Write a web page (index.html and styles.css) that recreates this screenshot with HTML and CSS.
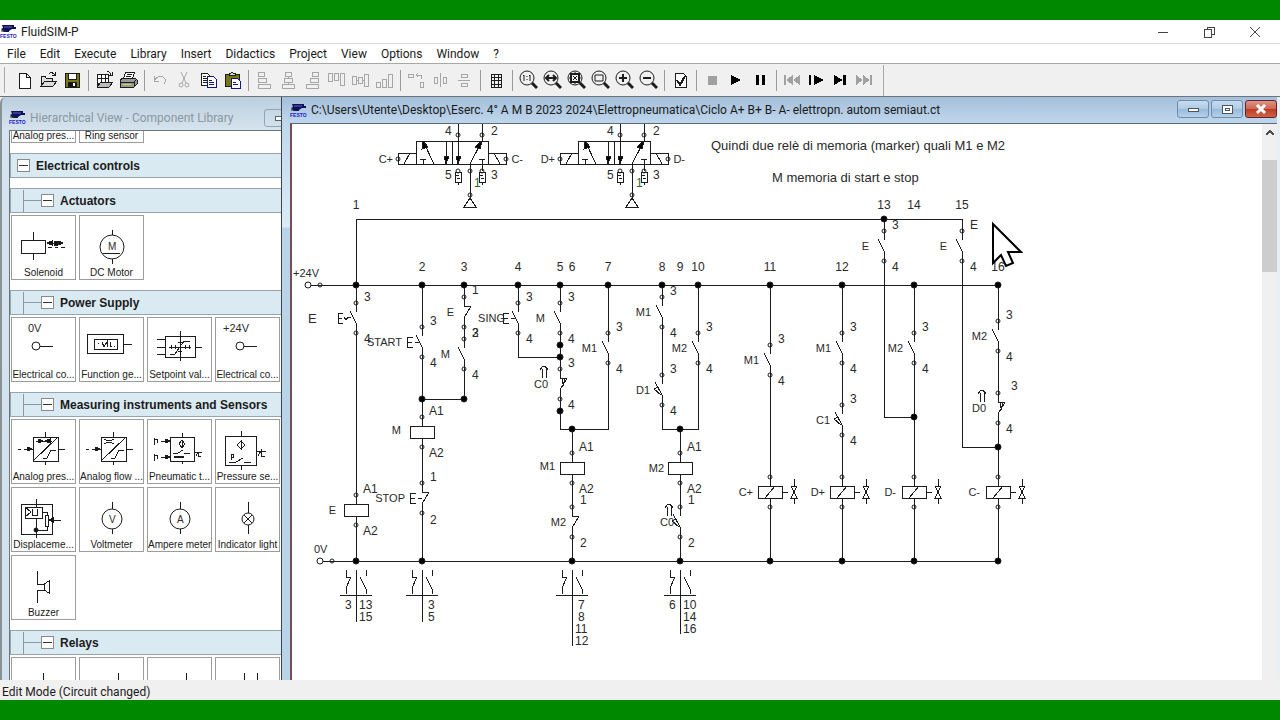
FILE: index.html
```html
<!DOCTYPE html>
<html lang="en">
<head>
  <meta charset="UTF-8">
  <title>FluidSIM-P</title>
  <link rel="stylesheet" href="styles.css">
</head>
<body>
  <!-- shared shapes -->
  <svg class="defs" width="0" height="0" aria-hidden="true">
    <defs>
      <symbol id="festo" viewBox="0 0 17 15">
        <path d="M2 1h12v2h2v2h-4l-3 2v1H4L1 5l2-1z" fill="#10105a"/>
        <path d="M4 3h8" stroke="#5a6ac8"/>
        <path d="M1 7h5" stroke="#222"/>
        <text x="0" y="14" font-size="5" font-weight="bold" class="festo-text">FESTO</text>
      </symbol>

      <g id="lens"><circle cx="9" cy="8" r="7"/><path d="M14 13l5 5" stroke-width="3"/></g>

      <!-- circuit symbols, origin = upper terminal -->
      <circle id="t" r="2"/>
      <circle id="dot" r="3" class="fill"/>
      <g id="no">
        <path d="M0 0V9M-6 8L0 20V30"/>
        <use href="#t"/><use href="#t" y="30"/>
      </g>
      <g id="nc">
        <path d="M0 0V9H7L0 21V30"/>
        <use href="#t"/><use href="#t" y="30"/>
      </g>
      <g id="no-limit">
        <path d="M0 0V9M-7 7L0 20V30M-4 12L-8 14L-1 20"/>
        <use href="#t"/><use href="#t" y="30"/>
      </g>
      <g id="nc-limit">
        <path d="M0 0V9H7L0 21V30M2 9L3 15M5 9L3 17"/>
        <use href="#t"/><use href="#t" y="30"/>
      </g>
      <g id="coil">
        <path d="M0 0V9M0 21V30M-12 9H12V21H-12Z"/>
        <use href="#t"/><use href="#t" y="30"/>
      </g>
      <g id="valve-coil">
        <use href="#coil"/>
        <path d="M-5 21L5 9M12 15H18M24 2V9M24 21V27M21 9H27L21 21H27Z"/>
      </g>
      <path id="push" d="M-9 10H-15V20H-9M-15 15H-10M-7 15H-3"/>
      <path id="hollow-up" d="M-2 12V3M2 12V3M-4 4L-1 0H1L4 4"/>
      <path id="xref" d="M0 9V34M-16 34H16M-10 9V16H-5L-10 27V33M10 9V15M4 16L10 28V33"/>

      <g id="valve">
        <path d="M416 141H488V164H416ZM452 141V164"/>
        <path d="M434 164L423 141M446 141V164M458 124V164M482 124V141M470 164L482 141"/>
        <path d="M420 159H426M423 159V164M479 159H485M482 159V171M470 164V198"/>
        <path d="M416 153H398V164H416M404 164L410 153M488 153H506V164H488M494 153L500 164"/>
        <path d="M470 198L464 207H476Z"/>
        <path class="fill" d="M423 141L422 149L428 147ZM482 141L475 147L480 149ZM444 156H449L446 164ZM456 156H461L458 164Z"/>
        <path d="M455 172H461V182H455ZM479 172H485V182H479ZM456 175H459M457 178H460M480 175H483M481 178H484M458 182V185M482 182V185"/>
        <use href="#t" x="458" y="135"/><use href="#t" x="482" y="135"/>
        <use href="#t" x="458" y="171"/><use href="#t" x="482" y="171"/>
        <use href="#t" x="470" y="171"/><use href="#t" x="470" y="195"/>
        <use href="#t" x="398" y="159"/><use href="#t" x="506" y="159"/>
        <g class="label">
          <text x="445" y="135">4</text><text x="491" y="135">2</text>
          <text x="445" y="179">5</text><text x="491" y="179">3</text>
          <text x="474" y="187" class="port">1</text>
        </g>
      </g>
    </defs>
  </svg>

  <div class="app">
    <header class="titlebar">
      <svg class="logo"><use href="#festo"/></svg>
      <span class="app-name">FluidSIM-P</span>
      <div class="window-controls">
        <button aria-label="Minimize"><svg width="12" height="12"><path d="M1 6h10"/></svg></button>
        <button aria-label="Restore"><svg width="12" height="12"><path d="M1 3h7v8H1zM4 3V1h7v7H8"/></svg></button>
        <button aria-label="Close"><svg width="12" height="12"><path d="M1 1l10 10M11 1L1 11"/></svg></button>
      </div>
    </header>

    <nav class="menubar">
      <button>File</button><button>Edit</button><button>Execute</button><button>Library</button><button>Insert</button><button>Didactics</button><button>Project</button><button>View</button><button>Options</button><button>Window</button><button>?</button>
    </nav>

    <div class="toolbar" role="toolbar">
      <span class="grip"></span>
      <button aria-label="New"><svg><path d="M5 3h7l4 4v11H5zM12 3v4h4" fill="#fff"/></svg></button>
      <button aria-label="Open"><svg><path d="M3 16V6h4l1 2h6v3M3 16l4-5h12l-4 5z" fill="#ddd"/><path d="M11 4q3-3 6 1M17 2v3h-3"/></svg></button>
      <button aria-label="Save"><svg><path d="M3 3h14v14H3z" fill="#77771a"/><path d="M6 3h8v6H6z" fill="#fff"/><path d="M6 12h8v5H6z" fill="#111"/><path d="M12 13v3" stroke="#fff" stroke-width="2"/></svg></button>
      <i class="sep"></i>
      <button aria-label="Open preview"><svg><path d="M3 4h11v9H3zM7 4v9M11 4v9M3 8h11" fill="#fff"/><path d="M3 13v4h12l4-5H7l-4 5" fill="#bbb"/><path d="M13 2q3-1 4 3M18 2v3h-3"/></svg></button>
      <button aria-label="Print"><svg><path d="M5 9l3-7h9l-3 7z" fill="#fff"/><path d="M9 4h5M8 6h5"/><path d="M2 10l3-2h12l2 2v4l-3 3H2z" fill="#999"/><path d="M2 12h14v5M16 12l3-3"/><path d="M5 14h8" stroke="#d8d820"/></svg></button>
      <i class="sep"></i>
      <button aria-label="Undo" disabled><svg><path d="M4 6v5h5M4 11q4-6 9-4q4 2 1 7" /></svg></button>
      <button aria-label="Cut" disabled><svg class="smooth"><path d="M7 2l5 11M13 2L8 13"/><circle cx="7" cy="15" r="2"/><circle cx="13" cy="15" r="2"/></svg></button>
      <button aria-label="Copy"><svg><path d="M3 3h6l3 3v9H3z" fill="#fff"/><path d="M5 6h3M5 8h5M5 10h5M5 12h5"/><g stroke="#14148c"><path d="M9 6h6l3 3v8H9z" fill="#fff"/><path d="M11 10h3M11 12h5M11 14h5"/></g></svg></button>
      <button aria-label="Paste"><svg><path d="M3 4h14v12H3z" fill="#77771a"/><path d="M7 5V3h2l1-1l1 1h2v2z" fill="#ddc"/><g stroke="#14148c"><path d="M9 8h6l3 3v7H9z" fill="#fff"/><path d="M11 12h3M11 14h5"/></g></svg></button>
      <i class="sep"></i>
      <button aria-label="Align left" disabled><svg><path d="M4 2h6v4H4zM4 8h8v4H4zM4 14h12v4H4z"/></svg></button>
      <button aria-label="Center horizontally" disabled><svg><path d="M7 2h6v4H7zM6 8h8v4H6zM4 14h12v4H4zM10 6v2M10 12v2"/></svg></button>
      <button aria-label="Align right" disabled><svg><path d="M10 2h6v4h-6zM8 8h8v4H8zM4 14h12v4H4z"/></svg></button>
      <button aria-label="Align top" disabled><svg><path d="M2 3h4v8H2zM8 3h4v7H8zM14 3h4v12h-4z"/></svg></button>
      <button aria-label="Center vertically" disabled><svg><path d="M2 6h4v8H2zM8 7h4v6H8zM14 4h4v12h-4zM6 10h2M12 10h2"/></svg></button>
      <button aria-label="Align bottom" disabled><svg><path d="M2 12h4v5H2zM8 9h4v8H8zM14 4h4v13h-4z"/></svg></button>
      <i class="sep"></i>
      <button aria-label="Rotate" disabled><svg><path d="M2 4h5v3H2zM14 12h3v5h-3zM10 5h4q2 0 2 4M12 3l-2 2l2 2"/></svg></button>
      <button aria-label="Mirror horizontally" disabled><svg><path d="M10 3v14M4 7h3v6H4zM13 7h3v6h-3z"/></svg></button>
      <button aria-label="Mirror vertically" disabled><svg><path d="M4 10h12M7 4h6v3H7zM7 13h6v3H7z"/></svg></button>
      <i class="sep"></i>
      <button aria-label="Grid"><svg><path d="M5 4h10v13H5zM8 4v13M12 4v13M5 7h10M5 10h10M5 14h10"/></svg></button>
      <i class="sep"></i>
      <button aria-label="Zoom 1:1"><svg class="smooth"><use href="#lens"/><path d="M6 5v6M5 6l1-1M9 6v1M9 9v1M12 5v6M11 6l1-1"/></svg></button>
      <button aria-label="Zoom previous"><svg class="smooth"><use href="#lens"/><path d="M4 8h10M7 5L4 8l3 3M11 5l3 3l-3 3" stroke-width="2"/></svg></button>
      <button aria-label="Fit to window"><svg class="smooth"><use href="#lens"/><path d="M5 4h8v8H5z" stroke-width="2"/><path d="M3 8h3M12 8h3M9 2v3M9 11v3M7 6l4 4M11 6l-4 4"/></svg></button>
      <button aria-label="Zoom section"><svg class="smooth"><use href="#lens"/><path d="M5 5h8v6H5z"/></svg></button>
      <button aria-label="Zoom in"><svg class="smooth"><use href="#lens"/><path d="M5 8h8M9 4v8" stroke-width="2"/></svg></button>
      <button aria-label="Zoom out"><svg class="smooth"><use href="#lens"/><path d="M5 8h8" stroke-width="2"/></svg></button>
      <i class="sep"></i>
      <button aria-label="Check drawing"><svg><path d="M5 3h8l3 3v11H5z" fill="#fff"/><path d="M7 10l3 5l5-9" stroke-width="2"/></svg></button>
      <i class="sep"></i>
      <button aria-label="Stop" disabled><svg><path class="solid" d="M6 6h9v9H6z"/></svg></button>
      <button aria-label="Start"><svg><path class="solid" d="M5 5l10 5l-10 5z"/></svg></button>
      <button aria-label="Pause"><svg><path class="solid" d="M6 5h3v10H6zM12 5h3v10h-3z"/></svg></button>
      <i class="sep"></i>
      <button aria-label="Reset" disabled><svg><path class="solid" d="M2 5h2v10H2zM11 5v10l-7-5zM18 5v10l-7-5z"/></svg></button>
      <button aria-label="Single step"><svg><path class="solid" d="M3 5h2v10H3zM8 5l10 5l-10 5z"/></svg></button>
      <button aria-label="Simulate until state change"><svg><path class="solid" d="M4 5l9 5l-9 5zM13 5h3v10h-3z"/></svg></button>
      <button aria-label="Next topic" disabled><svg><path class="solid" d="M2 5v10l7-5zM9 5v10l7-5zM16 5h2v10h-2z"/></svg></button>
      <span class="toolbar-end"></span>
    </div>

    <main class="workspace">
      <section class="library">
        <header class="library-title">
          <svg class="logo"><use href="#festo"/></svg>
          <span>Hierarchical View - Component Library</span>
          <button class="library-min" aria-label="Minimize library"><svg width="12" height="8"><path d="M1 2h10v4H1z"/></svg></button>
        </header>
        <div class="tree">
          <div class="parts scrolled">
            <div class="part"><span>Analog pres...</span></div>
            <div class="part"><span>Ring sensor</span></div>
          </div>

          <h2 class="group top"><button aria-label="Collapse"></button>Electrical controls</h2>

          <h3 class="group"><button aria-label="Collapse"></button>Actuators</h3>
          <div class="parts">
            <div class="part">
              <svg><path d="M9 24H33V37H9ZM21 16V24M21 37V44M36 31H40M43 31H46M49 31H53M35 27H51"/><path class="fill" d="M35 27l5-2v4zM42 25h3v4h-3zM51 27l-5-2v4z"/></svg>
              <span>Solenoid</span>
            </div>
            <div class="part">
              <svg><circle cx="32" cy="31" r="12"/><path d="M32 14V19M32 43V48M23 37H40"/><text x="28" y="34">M</text></svg>
              <span>DC Motor</span>
            </div>
          </div>

          <h3 class="group"><button aria-label="Collapse"></button>Power Supply</h3>
          <div class="parts">
            <div class="part">
              <svg><text x="16" y="14" class="big">0V</text><circle cx="24" cy="28" r="4"/><path d="M28 28H41"/></svg>
              <span>Electrical co...</span>
            </div>
            <div class="part">
              <svg><path d="M7 16H43V35H7ZM14 21H37V31H14ZM43 26H52M18 25h1M22 24l2 5l3-5v5M30 24v4h2M34 28h1"/></svg>
              <span>Function ge...</span>
            </div>
            <div class="part">
              <svg><path d="M17 18H47V39H17ZM9 21H17M9 29H17M9 36H17M47 29H54M32 13V43M21 29H43M23 27v4M27 27v4M37 27v4M41 27v4M30 24h4M30 33h4M22 36h5l9-13h6"/></svg>
              <span>Setpoint val...</span>
            </div>
            <div class="part">
              <svg><text x="7" y="14" class="big">+24V</text><circle cx="24" cy="28" r="4"/><path d="M28 28H41"/></svg>
              <span>Electrical co...</span>
            </div>
          </div>

          <h3 class="group"><button aria-label="Collapse"></button>Measuring instruments and Sensors</h3>
          <div class="parts">
            <div class="part">
              <svg><path d="M21 17H46V41H21ZM21 41L46 17M6 29H9M12 29H21M46 29H53M33 12V17M33 41V45M24 21H40M31 38h4l4-8h5"/><path class="fill" d="M15 27v4l5-2zM26 19v4l5-2zM38 19v4l-5-2z"/></svg>
              <span>Analog pres...</span>
            </div>
            <div class="part">
              <svg><path d="M21 17H46V41H21ZM21 41L46 17M6 29H9M12 29H21M46 29H53M33 12V17M33 41V45M31 38h4l4-8h5M24 19q5 4 10 0M24 24q5-4 10 0"/><path class="fill" d="M15 27v4l5-2z"/></svg>
              <span>Analog flow ...</span>
            </div>
            <div class="part">
              <svg><path d="M22 17H46V41H22ZM34 13V17M34 41V44M13 21H22M13 37H22M6 18v7M6 19h3v4M6 34v7M6 35h3v4M25 33h5l5-3M36 33h6M46 32H54M48 36l2-4v4h3M34 20l-3 4l3 4l3-4zM34 20v8"/><path d="M26 37H36" stroke-width="2"/><path class="fill" d="M17 19v4l5-2zM17 35v4l5-2z"/></svg>
              <span>Pneumatic t...</span>
            </div>
            <div class="part">
              <svg><path d="M9 16H40V45H9ZM25 11V16M25 45V50M40 31H50M42 36l3-5v5h4M25 21l-4 4l4 4l4-4zM25 20v10M15 34v6M15 34h2v3h-2M13 42h7l7-4M28 42h7"/></svg>
              <span>Pressure se...</span>
            </div>
            <div class="part">
              <svg><path d="M9 16H40V46H9ZM24 11V19M13 19H30V30H13ZM13 19l6 5l-6 5M20 21v6h5v-6M30 24H35V27M33 27H36V38H33ZM35 38V42H24M24 30V50M38 32H49"/><circle cx="24" cy="42" r="2" class="fill"/><path class="fill" d="M37 32l4-2v4z"/></svg>
              <span>Displaceme...</span>
            </div>
            <div class="part">
              <svg><circle cx="32" cy="31" r="10"/><path d="M32 14V21M32 41V46"/><text x="29" y="35">V</text></svg>
              <span>Voltmeter</span>
            </div>
            <div class="part">
              <svg><circle cx="32" cy="31" r="10"/><path d="M32 14V21M32 41V46"/><text x="29" y="35">A</text></svg>
              <span>Ampere meter</span>
            </div>
            <div class="part">
              <svg><circle cx="32" cy="31" r="6"/><path d="M32 14V25M32 37V46M28 27L36 35M36 27L28 35"/></svg>
              <span>Indicator light</span>
            </div>
            <div class="part">
              <svg><path d="M25 15V28H32V34H25V47M32 28L37 25V37L32 34"/></svg>
              <span>Buzzer</span>
            </div>
          </div>

          <h3 class="group"><button aria-label="Collapse"></button>Relays</h3>
          <div class="parts">
            <div class="part"><svg><path d="M31 15V40"/></svg></div>
            <div class="part"><svg><path d="M38 15V40"/></svg></div>
            <div class="part"><svg><path d="M38 15V40"/></svg></div>
            <div class="part"><svg><path d="M28 15V40M41 15V40"/></svg></div>
          </div>
        </div>
      </section>

      <section class="circuit">
        <header class="circuit-title">
          <svg class="logo"><use href="#festo"/></svg>
          <span class="path">C:\Users\Utente\Desktop\Eserc. 4° A M B 2023 2024\Elettropneumatica\Ciclo A+ B+ B- A- elettropn. autom semiaut.ct</span>
          <button aria-label="Minimize circuit"><svg width="12" height="10"><path d="M1 4h10v3H1z"/></svg></button>
          <button aria-label="Maximize circuit"><svg width="12" height="10"><path d="M1 1h10v8H1z"/><path d="M4 4h4v2H4z"/></svg></button>
          <button class="close" aria-label="Close circuit"><svg width="12" height="10"><path d="M2 1l8 8M10 1L2 9" stroke="#fff" stroke-width="3"/></svg></button>
        </header>

        <div class="sheet">
          <svg class="drawing" viewBox="292 124 969 556">
            <use href="#valve"/>
            <use href="#valve" x="162"/>

            <!-- wires -->
            <path d="M356 303V219H962V231M884 219V231M311 285H998M323 561H998"/>
            <path d="M356 333V495M356 525V561"/>
            <path d="M422 285V327M422 357V417M422 447V483M422 513V561M464 285V297M464 327V339M464 369V399H422"/>
            <path d="M518 285V303M518 333V357H560M560 285V303M560 333V369M560 399V429H608V363M608 285V333"/>
            <path d="M572 429V453M572 483V507M572 537V561"/>
            <path d="M662 285V297M662 327V375M662 405V429H698V363M698 285V333M680 429V453M680 483V507M680 537V561"/>
            <path d="M770 285V345M770 375V477M770 507V561"/>
            <path d="M842 285V333M842 363V405M842 435V477M842 507V561"/>
            <path d="M884 261V417H914M914 285V333M914 363V477M914 507V561"/>
            <path d="M962 261V447H998M998 285V321M998 351V393M998 423V477M998 507V561"/>

            <!-- supply terminals -->
            <circle cx="308" cy="285" r="3" class="open"/><use href="#t" x="320" y="285"/>
            <circle cx="320" cy="561" r="3" class="open"/><use href="#t" x="332" y="561"/>

            <!-- junctions -->
            <use href="#dot" x="884" y="219"/>
            <use href="#dot" x="356" y="285"/><use href="#dot" x="422" y="285"/><use href="#dot" x="464" y="285"/><use href="#dot" x="518" y="285"/>
            <use href="#dot" x="560" y="285"/><use href="#dot" x="608" y="285"/><use href="#dot" x="662" y="285"/><use href="#dot" x="698" y="285"/>
            <use href="#dot" x="770" y="285"/><use href="#dot" x="842" y="285"/><use href="#dot" x="914" y="285"/><use href="#dot" x="998" y="285"/>
            <use href="#dot" x="422" y="399"/><use href="#dot" x="464" y="399"/>
            <use href="#dot" x="560" y="345"/><use href="#dot" x="560" y="357"/><use href="#dot" x="560" y="411"/>
            <use href="#dot" x="572" y="429"/><use href="#dot" x="680" y="429"/><use href="#dot" x="914" y="417"/><use href="#dot" x="998" y="447"/>
            <use href="#dot" x="356" y="561"/><use href="#dot" x="422" y="561"/><use href="#dot" x="572" y="561"/><use href="#dot" x="680" y="561"/>
            <use href="#dot" x="770" y="561"/><use href="#dot" x="842" y="561"/><use href="#dot" x="914" y="561"/><use href="#dot" x="998" y="561"/>

            <!-- contacts -->
            <use href="#no" x="356" y="303"/><use href="#no" x="422" y="327"/><use href="#no" x="464" y="339"/>
            <use href="#no" x="518" y="303"/><use href="#no" x="560" y="303"/><use href="#no" x="608" y="333"/>
            <use href="#no" x="662" y="297"/><use href="#no" x="698" y="333"/><use href="#no" x="770" y="345"/>
            <use href="#no" x="842" y="333"/><use href="#no" x="884" y="231"/><use href="#no" x="914" y="333"/>
            <use href="#no" x="962" y="231"/><use href="#no" x="998" y="321"/>
            <use href="#nc" x="464" y="297"/><use href="#nc" x="422" y="483"/><use href="#nc" x="572" y="507"/>
            <use href="#no-limit" x="662" y="375"/><use href="#no-limit" x="842" y="405"/><use href="#no-limit" x="680" y="507"/>
            <use href="#nc-limit" x="560" y="369"/><use href="#nc-limit" x="998" y="393"/>
            <use href="#push" x="422" y="327"/><use href="#push" x="518" y="303"/><use href="#push" x="425" y="483"/>
            <path d="M343 313H338V323H343M338 318H342M344 317L346 320L348 317H351"/>
            <use href="#hollow-up" x="544" y="366"/><use href="#hollow-up" x="669" y="504"/><use href="#hollow-up" x="982" y="390"/>

            <!-- coils -->
            <use href="#coil" x="356" y="495"/><use href="#coil" x="422" y="417"/><use href="#coil" x="572" y="453"/><use href="#coil" x="680" y="453"/>
            <use href="#valve-coil" x="770" y="477"/><use href="#valve-coil" x="842" y="477"/><use href="#valve-coil" x="914" y="477"/><use href="#valve-coil" x="998" y="477"/>

            <!-- contact tables -->
            <use href="#xref" x="356" y="561"/><path d="M356 595V622"/>
            <use href="#xref" x="422" y="561"/><path d="M422 595V622"/>
            <use href="#xref" x="572" y="561"/><path d="M572 595V646"/>
            <use href="#xref" x="680" y="561"/><path d="M680 595V634"/>

            <g class="label mid">
              <text x="356" y="209">1</text><text x="422" y="271">2</text><text x="464" y="271">3</text><text x="518" y="271">4</text>
              <text x="560" y="271">5</text><text x="572" y="271">6</text><text x="608" y="271">7</text><text x="662" y="271">8</text>
              <text x="680" y="271">9</text><text x="698" y="271">10</text><text x="770" y="271">11</text><text x="842" y="271">12</text>
              <text x="884" y="209">13</text><text x="914" y="209">14</text><text x="962" y="209">15</text><text x="998" y="271">16</text>
            </g>

            <g class="label">
              <text x="364" y="301">3</text><text x="364" y="343">4</text>
              <text x="430" y="325">3</text><text x="430" y="367">4</text>
              <text x="472" y="294">1</text><text x="472" y="337">2</text><text x="472" y="337">3</text><text x="472" y="379">4</text>
              <text x="526" y="301">3</text><text x="526" y="343">4</text>
              <text x="568" y="301">3</text><text x="568" y="343">4</text><text x="568" y="367">3</text><text x="568" y="409">4</text>
              <text x="616" y="331">3</text><text x="616" y="373">4</text>
              <text x="670" y="295">3</text><text x="670" y="337">4</text><text x="670" y="373">3</text><text x="670" y="415">4</text>
              <text x="706" y="331">3</text><text x="706" y="373">4</text>
              <text x="778" y="343">3</text><text x="778" y="385">4</text>
              <text x="850" y="331">3</text><text x="850" y="373">4</text><text x="850" y="403">3</text><text x="850" y="445">4</text>
              <text x="892" y="229">3</text><text x="892" y="271">4</text>
              <text x="922" y="331">3</text><text x="922" y="373">4</text>
              <text x="970" y="229">E</text><text x="970" y="271">4</text>
              <text x="1006" y="319">3</text><text x="1006" y="361">4</text><text x="1011" y="390">3</text><text x="1006" y="433">4</text>
              <text x="363" y="493">A1</text><text x="363" y="535">A2</text>
              <text x="429" y="415">A1</text><text x="429" y="457">A2</text><text x="430" y="481">1</text><text x="430" y="524">2</text>
              <text x="579" y="451">A1</text><text x="579" y="493">A2</text><text x="580" y="504">1</text><text x="580" y="547">2</text>
              <text x="687" y="451">A1</text><text x="687" y="493">A2</text><text x="688" y="504">1</text><text x="688" y="547">2</text>
              <text x="293" y="277" class="device">+24V</text><text x="314" y="553" class="device">0V</text>
              <text x="308" y="323" class="note">E</text>
            </g>

            <g class="device end">
              <text x="336" y="514">E</text><text x="402" y="346">START</text><text x="401" y="434">M</text><text x="405" y="502">STOP</text>
              <text x="454" y="316">E</text><text x="450" y="358">M</text><text x="505" y="322">SING</text><text x="545" y="322">M</text>
              <text x="548" y="388">C0</text><text x="597" y="352">M1</text><text x="555" y="470">M1</text><text x="566" y="526">M2</text>
              <text x="651" y="316">M1</text><text x="687" y="352">M2</text><text x="650" y="394">D1</text><text x="664" y="472">M2</text><text x="674" y="526">C0</text>
              <text x="759" y="364">M1</text><text x="831" y="352">M1</text><text x="830" y="424">C1</text><text x="903" y="352">M2</text>
              <text x="869" y="250">E</text><text x="947" y="250">E</text><text x="987" y="340">M2</text><text x="986" y="412">D0</text>
              <text x="753" y="496">C+</text><text x="825" y="496">D+</text><text x="896" y="496">D-</text><text x="980" y="496">C-</text>
              <text x="393" y="163">C+</text><text x="523" y="163">C-</text><text x="555" y="163">D+</text><text x="685" y="163">D-</text>
            </g>

            <g class="label">
              <text x="345" y="609">3</text><text x="359" y="609">13</text><text x="359" y="621">15</text>
              <text x="428" y="609">3</text><text x="428" y="621">5</text>
              <text x="578" y="609">7</text><text x="578" y="621">8</text><text x="575" y="633">11</text><text x="575" y="645">12</text>
              <text x="669" y="609">6</text><text x="683" y="609">10</text><text x="683" y="621">14</text><text x="683" y="633">16</text>
            </g>

            <g class="note">
              <text x="711" y="150">Quindi due relè di memoria (marker) quali M1 e M2</text>
              <text x="772" y="182">M memoria di start e stop</text>
            </g>

            <path class="cursor" d="M993 224L1021 252H1008L1013 263L1006 266L1001 255L993 263Z"/>
          </svg>
          <div class="scrollbar">
            <button aria-label="Scroll up"><svg width="10" height="8"><path d="M1 6l4-4l4 4"/></svg></button>
            <div class="track-above"></div>
            <div class="thumb"></div>
            <div class="track-below"></div>
          </div>
        </div>
      </section>
    </main>

    <footer class="statusbar">Edit Mode (Circuit changed)</footer>
  </div>
</body>
</html>
```
FILE: styles.css
```css
* {
  box-sizing: border-box;
}

body {
  margin: 0;
  height: 100vh;
  padding: 20px 0;
  background: #008800;
  font-family: Roboto, "Open Sans", sans-serif;
  font-size: 12px;
  color: #1a1a1a;
  overflow: hidden;
}

button {
  margin: 0;
  padding: 0;
  border: 0;
  background: none;
  font: inherit;
  color: inherit;
}

svg {
  display: block;
  fill: none;
  stroke: #1c1c1c;
  shape-rendering: crispEdges;
}

svg circle {
  shape-rendering: geometricPrecision;
}

svg text {
  stroke: none;
  fill: #2a2a2a;
  font-family: "Liberation Sans", Arial, sans-serif;
}

.defs {
  position: absolute;
}

.logo {
  width: 17px;
  height: 15px;
  flex: none;
  stroke: none;
  shape-rendering: auto;
}

.festo-text {
  fill: #1818c8;
}

.app {
  display: flex;
  flex-direction: column;
  height: 100%;
  background: #fff;
}

/* title bar */
.titlebar {
  display: flex;
  align-items: center;
  gap: 4px;
  height: 24px;
  flex: none;
  border-bottom: 1px solid #dcdcdc;
}

.window-controls {
  display: flex;
  margin-left: auto;
  padding-right: 2px;
}

.window-controls button {
  display: flex;
  justify-content: center;
  align-items: center;
  width: 46px;
  height: 22px;
}

.window-controls svg {
  stroke: #444;
}

/* menu */
.menubar {
  display: flex;
  height: 20px;
  flex: none;
  border-bottom: 1px solid #a8a8a8;
}

.menubar button {
  padding: 0 7px;
}

/* toolbar */
.toolbar {
  display: flex;
  align-items: center;
  height: 33px;
  flex: none;
  background: #f0f0f0;
  border-bottom: 1px solid #6e7378;
}

.toolbar button {
  width: 24px;
  height: 24px;
  padding: 2px;
}

.toolbar svg {
  width: 20px;
  height: 20px;
}

.toolbar .smooth {
  shape-rendering: auto;
}

.toolbar .solid {
  fill: #000;
  stroke: none;
}

.toolbar button:disabled svg {
  stroke: #a6a6a6;
}

.toolbar button:disabled .solid {
  fill: #a0a0a0;
}

.sep {
  width: 8px;
  height: 21px;
  background: linear-gradient(#9a9a9a, #9a9a9a) center / 1px 100% no-repeat;
}

.grip {
  width: 5px;
  height: 26px;
  margin-right: 7px;
  border-right: 1px solid #a8a8a8;
}

.toolbar-end {
  width: 8px;
  height: 31px;
  border-right: 1px solid #a8a8a8;
}

/* workspace */
.workspace {
  display: flex;
  flex: 1;
  min-height: 0;
  background: #e9eef2;
}

.library {
  display: flex;
  flex-direction: column;
  width: 282px;
  flex: none;
  padding-left: 7px;
  border-left: 2px solid #8a9299;
  border-right: 1px solid #3c4650;
  border-top-left-radius: 6px;
  background: linear-gradient(#bccfdf, #d6e3ee 33px, #d3e2ee);
  overflow: hidden;
}

.library-title {
  display: flex;
  align-items: center;
  gap: 4px;
  height: 33px;
  flex: none;
  padding-top: 8px;
  color: #8a979f;
  white-space: nowrap;
}

.library-min {
  width: 32px;
  height: 18px;
  flex: none;
  margin-left: auto;
  margin-right: -15px;
  padding-left: 9px;
  border: 1px solid #94a3b0;
  border-radius: 3px;
}

.library-min svg {
  stroke: #59636c;
  fill: #fff;
}

.tree {
  flex: 1;
  min-height: 0;
  border-top: 1px solid #69757f;
  border-left: 1px solid #69757f;
  background: #fff;
  overflow: hidden;
}

.group {
  display: flex;
  align-items: center;
  height: 25px;
  margin: 0;
  border: 1px solid #98a4ab;
  border-width: 1px 0 1px 1px;
  background: #daeaf3;
  font-family: "Liberation Sans", Arial, sans-serif;
  font-size: 12px;
  font-weight: bold;
}

.group button {
  width: 13px;
  height: 13px;
  margin-right: 6px;
  border: 1px solid #8a8a8a;
  background: linear-gradient(#333, #333) center / 9px 1px no-repeat #fff;
}

h2.group {
  margin-bottom: 10px;
  padding-left: 6px;
}

h3.group::before {
  content: "";
  width: 17px;
  height: 22px;
  margin-left: 12px;
  border-left: 1px solid #8d989e;
  background: linear-gradient(#8d989e, #8d989e) center / 100% 1px no-repeat;
}

.parts {
  display: grid;
  grid-template-columns: repeat(4, 65px);
  gap: 3px;
  padding: 2px 1px 10px;
}

.part {
  display: flex;
  flex-direction: column;
  height: 65px;
  border: 1px solid #9c9c9c;
  background: #fff;
  font-family: "Liberation Sans", Arial, sans-serif;
  font-size: 10px;
  line-height: 12px;
  text-align: center;
  white-space: nowrap;
}

.part svg {
  width: 63px;
  height: 51px;
}

.part svg text {
  font-size: 10px;
}

.part svg .big {
  font-size: 11px;
}

.part .fill {
  fill: #111;
}

.scrolled {
  padding-top: 0;
}

.scrolled .part {
  height: 12px;
  border-top: 0;
  line-height: 10px;
}

/* circuit window */
.circuit {
  display: flex;
  flex-direction: column;
  flex: 1;
  min-width: 0;
  margin-right: 3px;
  padding-left: 8px;
  background: linear-gradient(#a4bfdb, #bfd7ec 26px, #dcebf7 130px, #b9d3e8 131px, #b9d3e8);
}

.circuit-title {
  display: flex;
  align-items: center;
  gap: 2px;
  height: 26px;
  flex: none;
}

.circuit-title .path {
  margin-left: 2px;
  margin-right: auto;
  white-space: nowrap;
}

.circuit-title button {
  display: flex;
  align-items: center;
  justify-content: center;
  width: 32px;
  height: 18px;
  margin-bottom: 2px;
  border: 1px solid #6f8baa;
  border-radius: 3px;
  background: linear-gradient(#c9dcee, #aecbe5 50%, #98b9d9 50%, #b4d0ea);
}

.circuit-title button svg {
  stroke: #4a5560;
  fill: #fff;
}

.circuit-title .close {
  border-color: #5e2430;
  background: linear-gradient(#dc9485, #cf6552 50%, #bd3a24 50%, #cf6345);
}

.circuit-title .close svg {
  shape-rendering: auto;
}

.sheet {
  display: flex;
  flex: 1;
  min-height: 0;
  border-top: 1px solid #5a6a78;
  border-left: 2px solid #7c4a50;
  background: #fff;
  overflow: hidden;
}

.drawing {
  width: 969px;
  height: 556px;
  flex: none;
}

.label {
  font-size: 12px;
}

.device {
  font-size: 11px;
}

.note {
  font-size: 13px;
}

.label .port {
  fill: #2c6b2c;
}

.mid {
  text-anchor: middle;
}

.end {
  text-anchor: end;
}

.fill {
  fill: #000;
}

.open {
  fill: #fff;
}

.cursor {
  fill: #fff;
  stroke: #000;
  stroke-width: 2;
  shape-rendering: auto;
}

.scrollbar {
  display: flex;
  flex-direction: column;
  width: 15px;
  flex: none;
  margin-left: auto;
  background: #f0f0f0;
}

.scrollbar button {
  display: flex;
  align-items: center;
  justify-content: center;
  height: 17px;
}

.scrollbar button path {
  stroke: #505050;
  stroke-width: 2;
}

.track-above {
  flex: 19;
}

.thumb {
  flex: 112;
  background: #cdcdcd;
}

.track-below {
  flex: 408;
}

.statusbar {
  height: 20px;
  flex: none;
  padding: 4px 2px 0;
  background: #f0f0f0;
  line-height: 16px;
}
```
